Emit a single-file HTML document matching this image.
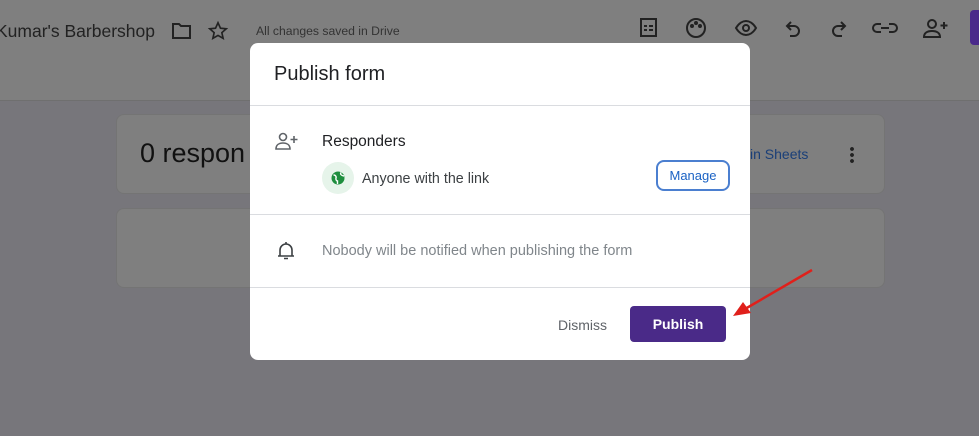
<!DOCTYPE html><html><head><style>
*{margin:0;padding:0;box-sizing:border-box}
body{width:979px;height:436px;overflow:hidden;background:#77767b;font-family:"Liberation Sans",sans-serif;position:relative}
.hdr{position:absolute;left:0;top:0;width:979px;height:101px;background:#7f7f7f;border-bottom:1px solid #6f6f6f}
.a{position:absolute}
.card{position:absolute;background:#7f7f7f;border:1px solid #747474;border-radius:8px}
.dlg{position:absolute;left:250px;top:43px;width:500px;height:317px;background:#fff;border-radius:8px}
.hr{position:absolute;left:0;width:500px;height:1px;background:#dadce0}
svg{position:absolute}
</style></head><body>
<div class="hdr"></div>
<div class="a" style="left:-4px;top:21px;font-size:17.5px;color:#222">Kumar's Barbershop</div>
<svg style="left:171px;top:21px" width="22" height="20" viewBox="0 0 22 20"><path d="M2 3h6l2 2h9v12H2z" fill="none" stroke="#222" stroke-width="2"/></svg>
<svg style="left:207px;top:20px" width="22" height="22" viewBox="0 0 24 24"><path d="M12 3l2.7 6 6.3.6-4.8 4.2 1.4 6.2L12 16.8 6.4 20l1.4-6.2L3 9.6l6.3-.6z" fill="none" stroke="#222" stroke-width="1.8"/></svg>
<div class="a" style="left:256px;top:24px;font-size:12.2px;color:#333">All changes saved in Drive</div>
<svg style="left:638px;top:16px" width="320" height="24" viewBox="0 0 320 24" fill="none" stroke="#222" stroke-width="2">
<rect x="3" y="3" width="15" height="17"/><path d="M6 10h3M11 10h4M6 14h3M11 14h4"/>
<circle cx="58" cy="12" r="9"/><circle cx="54" cy="10" r="1"/><circle cx="58" cy="7" r="1"/><circle cx="62" cy="10" r="1"/>
<path d="M98 12c3-5 7-7 10-7s7 2 10 7c-3 5-7 7-10 7s-7-2-10-7z"/><circle cx="108" cy="12" r="3"/>
<path d="M153 6l-4 4 4 4M149 10h7a5 5 0 010 10h-4"/>
<path d="M203 6l4 4-4 4M207 10h-7a5 5 0 000 10h4"/>
<path d="M243 8h-4a4 4 0 000 8h4M251 8h4a4 4 0 010 8h-4M243 12h8"/>
<circle cx="294" cy="8" r="4"/><path d="M286 21c0-4 3-6 8-6s8 2 8 6z"/><path d="M306 6v7M302.5 9.5h7"/>
</svg>
<div class="a" style="left:970px;top:10px;width:20px;height:35px;background:#4a2a8a;border-radius:4px"></div>
<div class="card" style="left:116px;top:114px;width:769px;height:80px"></div>
<div class="a" style="left:140px;top:138px;font-size:27px;color:#111">0 respon</div>
<div class="a" style="left:750px;top:146px;font-size:14px;color:#1a3f78">in Sheets</div>
<div class="a" style="left:850px;top:146px;width:4px;height:18px;background:radial-gradient(circle,#222 1.8px,transparent 2px) 0 0/4px 6px"></div>
<div class="card" style="left:116px;top:208px;width:769px;height:80px"></div>
<div class="dlg">
<div class="a" style="left:24px;top:20px;font-size:20px;color:#202124">Publish form</div>
<div class="hr" style="top:62px"></div>
<svg style="left:24px;top:89px" width="26" height="20" viewBox="0 0 26 20" fill="none" stroke="#5f6368" stroke-width="1.6"><circle cx="9" cy="5" r="3.5"/><path d="M2 17c0-4 3-6 7-6s7 2 7 6z"/><path d="M20 4v7M16.5 7.5h7"/></svg>
<div class="a" style="left:72px;top:90px;font-size:15.5px;color:#202124">Responders</div>
<div class="a" style="left:72px;top:119px;width:32px;height:32px;border-radius:50%;background:#e6f4ea"></div>
<svg style="left:81px;top:128px" width="14" height="14" viewBox="0 0 14 14"><circle cx="7" cy="7" r="6.5" fill="#1e8e3e"/><path d="M2.5 4c2 0 3 1.5 2.5 3s.5 3 1.5 3v3M10 1.5c-1 1.5 0 3 3 3.5" stroke="#fff" stroke-width="1.4" fill="none"/></svg>
<div class="a" style="left:112px;top:128px;font-size:14.3px;color:#3c4043">Anyone with the link</div>
<div class="a" style="left:406px;top:117px;width:74px;height:31px;border:2px solid #4b7fd0;border-radius:8px;color:#1a62c4;font-size:13px;text-align:center;line-height:27px">Manage</div>
<div class="hr" style="top:171px"></div>
<svg style="left:27px;top:198px" width="18" height="20" viewBox="0 0 18 20" fill="none" stroke="#3c4043" stroke-width="1.6"><path d="M3 15V9a6 6 0 0112 0v6M1 15h16M9 1v2M7 17.5h4"/></svg>
<div class="a" style="left:72px;top:200px;font-size:14.5px;color:#80868b">Nobody will be notified when publishing the form</div>
<div class="hr" style="top:244px"></div>
<div class="a" style="left:308px;top:274px;font-size:14px;color:#5f6368">Dismiss</div>
<div class="a" style="left:380px;top:263px;width:96px;height:36px;background:#4a2a88;border-radius:4px;color:#fff;font-size:14px;font-weight:bold;text-align:center;line-height:36px">Publish</div>
</div>
<svg style="left:0;top:0" width="979" height="436"><path d="M812 270L745 309" stroke="#e0201b" stroke-width="2.5"/><path d="M733 316l10-14 8 11z" fill="#e0201b"/></svg>
</body></html>
